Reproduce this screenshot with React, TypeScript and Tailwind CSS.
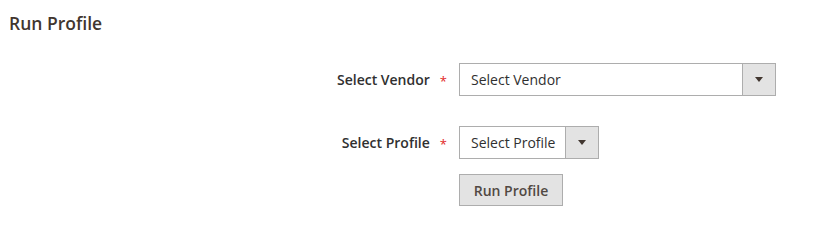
import React from "react";

function Arrow() {
  return (
    <div className="flex h-full w-[33px] items-center justify-center border-l border-[#adadad] bg-[#e3e3e3]">
      <div className="h-0 w-0 border-x-[4px] border-t-[5px] border-x-transparent border-t-[#41362f]" />
    </div>
  );
}

function Row({ label, value, width, className }: { label: string; value: string; width: string; className?: string }) {
  return (
    <div className={"flex items-center " + (className ?? "")}>
      <div className="flex w-[459px] items-center justify-end pr-[12px]">
        <span className="text-[14px] font-semibold text-[#303030]">{label}</span>
        <span className="ml-[10px] mt-[3px] text-[13px] leading-none text-[#e22626]">*</span>
      </div>
      <div className={"flex h-[33px] items-stretch border border-[#adadad] bg-white " + width}>
        <div className="flex flex-1 items-center pl-[11px] text-[14px] text-[#303030]">{value}</div>
        <Arrow />
      </div>
    </div>
  );
}

export default function App() {
  return (
    <div className="h-[241px] w-[830px] bg-white" style={{ fontFamily: '"Open Sans", "Liberation Sans", sans-serif' }}>
      <div className="pl-[9px] pt-[11px] text-[17.5px] font-semibold leading-6 text-[#41362f]">Run Profile</div>
      <Row label="Select Vendor" value="Select Vendor" width="w-[317px]" className="mt-[28px]" />
      <Row label="Select Profile" value="Select Profile" width="w-[140px]" className="mt-[30px]" />
      <div className="mt-[15px] pl-[459px]">
        <button className="h-[32px] w-[104px] border border-[#adadad] bg-[#e3e3e3] text-[14px] font-semibold text-[#514943]">
          Run Profile
        </button>
      </div>
    </div>
  );
}
